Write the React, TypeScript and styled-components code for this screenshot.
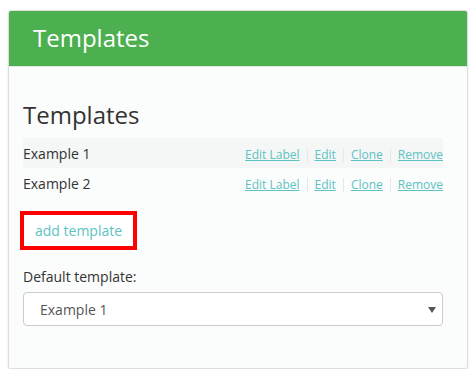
import React from 'react';
import styled, { createGlobalStyle } from 'styled-components';

const GlobalStyle = createGlobalStyle`
  html, body {
    margin: 0;
    padding: 0;
    background: #ffffff;
  }
  body {
    font-family: "Open Sans", "DejaVu Sans", sans-serif;
    font-size: 14px;
    color: #333333;
  }
  * {
    box-sizing: border-box;
  }
`;

const Page = styled.div`
  padding: 10px 8px 0 8px;
`;

const Panel = styled.section`
  width: 460px;
  border: 1px solid #dedede;
  border-radius: 3px;
  background: #fbfcfc;
  box-shadow: 0 1px 2px rgba(0, 0, 0, 0.12);
  overflow: hidden;
`;

const PanelHeader = styled.header`
  height: 56px;
  background: #4caf50;
  border-bottom: 1px solid #e3e6e6;
  display: flex;
  align-items: center;
  padding: 0 24px;
`;

const PanelTitle = styled.h1`
  margin: 0;
  color: #ffffff;
  font-size: 24px;
  font-weight: 400;
  line-height: 1.1;
`;

const PanelBody = styled.div`
  padding: 35px 24px 42px 14px;
`;

const Heading = styled.h2`
  margin: 0 0 10px 0;
  font-size: 24px;
  font-weight: 400;
  line-height: 1.1;
  color: #333333;
`;

const TemplateList = styled.div`
  display: flex;
  flex-direction: column;
`;

const TemplateRow = styled.div<{ $striped: boolean }>`
  height: 30px;
  display: flex;
  align-items: center;
  justify-content: space-between;
  background: ${({ $striped }) => ($striped ? '#f5f6f6' : 'transparent')};
`;

const TemplateName = styled.span`
  font-size: 14px;
  color: #333333;
`;

const Actions = styled.div`
  display: flex;
  align-items: center;
  padding-top: 3px;
`;

const ActionLink = styled.a`
  font-size: 12px;
  color: #5bc3c2;
  text-decoration: underline;
  cursor: pointer;
`;

const Separator = styled.span`
  width: 1px;
  height: 14px;
  margin: 0 7px;
  background: #e6e8ea;
`;

const AddButton = styled.button`
  margin-top: 13px;
  margin-left: -3px;
  height: 39px;
  padding: 0 11px 0 11px;
  border: 4px solid #ff0000;
  background: #ffffff;
  font-family: inherit;
  font-size: 14px;
  color: #5bc3c2;
  cursor: pointer;
`;

const Field = styled.div`
  margin-top: 17px;
  display: flex;
  flex-direction: column;
  gap: 5px;
`;

const Label = styled.label`
  font-size: 14px;
  font-weight: 500;
  line-height: 20px;
  color: #333333;
`;

const SelectBox = styled.div`
  position: relative;
  height: 34px;
  border: 1px solid #cccccc;
  border-radius: 4px;
  background: #ffffff;
  display: flex;
  align-items: center;
  padding: 0 16px;
  font-size: 14px;
  color: #555555;
`;

const Caret = styled.svg`
  position: absolute;
  right: 6px;
  top: 14px;
`;

const templates = ['Example 1', 'Example 2'];
const actions = ['Edit Label', 'Edit', 'Clone', 'Remove'];

const App: React.FC = () => {
  return (
    <>
      <GlobalStyle />
      <Page>
        <Panel>
          <PanelHeader>
            <PanelTitle>Templates</PanelTitle>
          </PanelHeader>
          <PanelBody>
            <Heading>Templates</Heading>
            <TemplateList>
              {templates.map((name, i) => (
                <TemplateRow key={name} $striped={i % 2 === 0}>
                  <TemplateName>{name}</TemplateName>
                  <Actions>
                    {actions.map((action, j) => (
                      <React.Fragment key={action}>
                        {j > 0 && <Separator />}
                        <ActionLink>{action}</ActionLink>
                      </React.Fragment>
                    ))}
                  </Actions>
                </TemplateRow>
              ))}
            </TemplateList>
            <AddButton>add template</AddButton>
            <Field>
              <Label>Default template:</Label>
              <SelectBox>
                Example 1
                <Caret width="8" height="6" viewBox="0 0 8 6">
                  <path d="M0 0 L8 0 L4 6 Z" fill="#555555" />
                </Caret>
              </SelectBox>
            </Field>
          </PanelBody>
        </Panel>
      </Page>
    </>
  );
};

export default App;
